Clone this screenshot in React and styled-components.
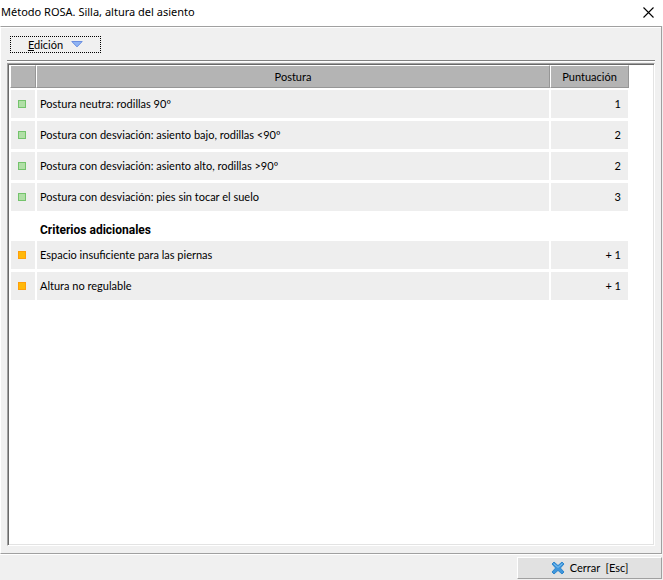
import styled, { createGlobalStyle } from "styled-components";

const colors = {
  face: "#f0f0f0",
  row: "#eeeeee",
  header: "#b4b4b4",
  headerEdge: "#969696",
  shadow: "#a0a0a0",
  rule: "#808080",
  darkShadow: "#696969",
  light: "#e3e3e3",
  white: "#ffffff",
};

const postures = [
  { id: "neutral", label: "Postura neutra: rodillas 90º", score: "1" },
  { id: "low", label: "Postura con desviación: asiento bajo, rodillas <90º", score: "2" },
  { id: "high", label: "Postura con desviación: asiento alto, rodillas >90º", score: "2" },
  { id: "feet", label: "Postura con desviación: pies sin tocar el suelo", score: "3" },
];

const extras = [
  { id: "space", label: "Espacio insuficiente para las piernas", score: "+ 1" },
  { id: "height", label: "Altura no regulable", score: "+ 1" },
];

export default function App() {
  return (
    <>
      <GlobalStyle />
      <Dialog>
        <TitleBar>
          <Title>Método ROSA. Silla, altura del asiento</Title>
          <CloseButton aria-label="Cerrar ventana">
            <svg width="11" height="11" viewBox="0 0 11 11">
              <path d="M0.5 0.5L10.5 10.5M10.5 0.5L0.5 10.5" stroke="#000" strokeWidth="1.1" />
            </svg>
          </CloseButton>
        </TitleBar>
        <Panel>
          <Toolbar>
            <MenuButton>
              <span>
                <u>E</u>dición
              </span>
              <svg width="12" height="7" viewBox="0 0 12 7">
                <path d="M0.8 0.5H11.2L6 5.9Z" fill="#8fb4f4" stroke="#6b8fe0" />
              </svg>
            </MenuButton>
          </Toolbar>
          <ListBox>
            <Table>
              <colgroup>
                <col width="26" />
                <col />
                <col width="79" />
              </colgroup>
              <thead>
                <tr>
                  <HeaderCell aria-label="Tipo" />
                  <HeaderCell>Postura</HeaderCell>
                  <HeaderCell>Puntuación</HeaderCell>
                </tr>
              </thead>
              <tbody>
                {postures.map((item) => (
                  <Row key={item.id} {...item} />
                ))}
                <tr>
                  <SectionCell />
                  <SectionCell as="th" scope="rowgroup" colSpan={2}>
                    Criterios adicionales
                  </SectionCell>
                </tr>
                {extras.map((item) => (
                  <Row key={item.id} {...item} isExtra />
                ))}
              </tbody>
            </Table>
          </ListBox>
        </Panel>
        <Footer>
          <ExitButton>
            <svg width="14" height="14" viewBox="0 0 14 14">
              <path
                d="M3 1L7 4.6L11 1L13 3L9.4 7L13 11L11 13L7 9.4L3 13L1 11L4.6 7L1 3Z"
                fill="#3f96dc"
                stroke="#2f86cc"
                strokeLinejoin="round"
              />
              <path d="M2.6 2.6L7 6.4L11.4 2.6" fill="none" stroke="#86c5f2" />
            </svg>
            <span>Cerrar&nbsp; [Esc]</span>
          </ExitButton>
        </Footer>
      </Dialog>
    </>
  );
}

function Row({ label, score, isExtra }) {
  return (
    <tr>
      <Cell>
        <Marker $isExtra={isExtra} />
      </Cell>
      <Cell>{label}</Cell>
      <Cell $align="right">{score}</Cell>
    </tr>
  );
}

const GlobalStyle = createGlobalStyle`
  * {
    box-sizing: border-box;
  }

  body {
    margin: 0;
    background: ${colors.face};
    color: #000;
    font-family: Lato, sans-serif;
    font-size: 11px;
    line-height: 14px;
  }

  button {
    font: inherit;
    color: inherit;
    padding: 0;
  }

  svg {
    display: block;
  }
`;

const Dialog = styled.div`
  display: flex;
  flex-direction: column;
  min-height: 100vh;
`;

const TitleBar = styled.header`
  display: flex;
  align-items: center;
  justify-content: space-between;
  height: 26px;
  padding: 0 9px 2px 1px;
  background: ${colors.white};
`;

const Title = styled.h1`
  margin: 0;
  font-family: "Noto Sans", sans-serif;
  font-size: 11px;
  line-height: 16px;
  font-weight: 400;
`;

const CloseButton = styled.button`
  border: none;
  background: none;
`;

const Panel = styled.main`
  flex: 1;
  display: flex;
  flex-direction: column;
  margin-right: 1px;
  padding: 0 6px 7px;
  border: 1px solid ${colors.shadow};
  border-left-color: ${colors.white};
  box-shadow: inset 0 1px ${colors.white}, 0 1px ${colors.white};
`;

const Toolbar = styled.div`
  padding: 9px 3px 7px;
  border-bottom: 1px solid ${colors.rule};
  box-shadow: 0 1px ${colors.white};
`;

const MenuButton = styled.button`
  display: flex;
  align-items: center;
  justify-content: center;
  gap: 8px;
  width: 91px;
  height: 17px;
  border: 1px dotted #000;
  background: none;
`;

const ListBox = styled.div`
  flex: 1;
  margin-top: 2px;
  padding: 1px 25px 1px 2px;
  border: 1px solid ${colors.shadow};
  border-right-color: ${colors.white};
  border-bottom-color: ${colors.white};
  background: ${colors.white};
  box-shadow: inset 1px 1px ${colors.darkShadow}, inset -1px -1px ${colors.light};
`;

const Table = styled.table`
  width: 100%;
  table-layout: fixed;
  border-spacing: 0;
`;

const HeaderCell = styled.th`
  height: 23px;
  padding: 0;
  border: 1px solid ${colors.headerEdge};
  border-top-color: ${colors.white};
  border-left-color: ${colors.white};
  background: ${colors.header};
  font-weight: 400;
`;

const Cell = styled.td`
  height: 31px;
  padding: 0 7px 0 3px;
  border: 1px solid ${colors.white};
  border-top-width: 2px;
  background: ${colors.row};
  text-align: ${({ $align }) => $align || "left"};
`;

const SectionCell = styled.td`
  height: 27px;
  padding: 8px 0 0 4px;
  text-align: left;
  font-family: Roboto, sans-serif;
  font-size: 12px;
  font-weight: 700;
`;

const Marker = styled.span`
  display: block;
  width: 8px;
  height: 8px;
  margin-left: 4px;
  border: 1px solid ${({ $isExtra }) => ($isExtra ? "#ff9f0a" : "#74c36c")};
  background: ${({ $isExtra }) => ($isExtra ? "#ffb90a" : "#b0dfa6")};
`;

const Footer = styled.footer`
  display: flex;
  justify-content: flex-end;
  padding: 3px 1px 1px;
`;

const ExitButton = styled.button`
  display: flex;
  align-items: center;
  justify-content: center;
  gap: 5px;
  width: 145px;
  height: 22px;
  border: 1px solid ${colors.shadow};
  border-top-color: ${colors.white};
  border-left-color: ${colors.white};
  background: #e1e1e1;
`;
